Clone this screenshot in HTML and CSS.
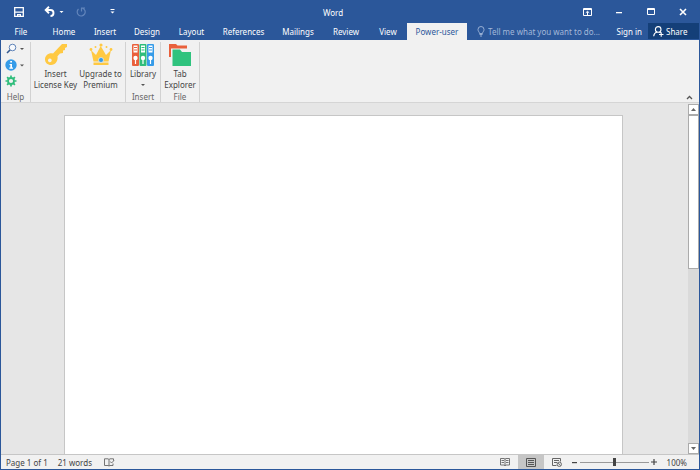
FILE: index.html
```html
<!DOCTYPE html>
<html lang="en">
<head>
<meta charset="utf-8">
<title>Word</title>
<link rel="stylesheet" href="styles.css">
</head>
<body>
<div class="window">
  <header class="titlebar">
    <div class="quick">
      <button class="ico save" aria-label="Save"><svg width="10" height="10" viewBox="0 0 10 10"><path d="M.7.7h8.600v8.600H.7z" fill="none" stroke="#fff" stroke-width="1.300"/><path d="M1 4.500h8v1.200H1zM3 7h4v2.500H5.500V8h-1v1.500H3z" fill="#fff"/></svg></button>
      <button class="ico undo" aria-label="Undo"><svg width="20" height="11" viewBox="0 0 20 11"><path d="M5 .8 1.700 4 5 7.200M2 4h4.500a3 3 0 0 1 0 6" fill="none" stroke="#fff" stroke-width="1.900"/><path d="M15.500 5h4l-2 2z" fill="#fff"/></svg></button>
      <button class="ico redo" aria-label="Redo"><svg width="10" height="10" viewBox="0 0 10 10"><path d="M6.500 1.200A4 4 0 1 1 2.500 2M5.500 4.500V1h3.500" fill="none" stroke="#6285bb" stroke-width="1.200"/></svg></button>
      <button class="ico more" aria-label="Customize toolbar"><svg width="5" height="5" viewBox="0 0 5 5"><path d="M.5 0h4v1h-4zM.5 2.500h4l-2 2z" fill="#fff"/></svg></button>
    </div>
    <h1>Word</h1>
    <div class="controls">
      <button class="ico" aria-label="Ribbon display options"><svg width="9" height="8" viewBox="0 0 9 8"><path d="M.5.5h8v7h-8zM0 1.500h9M4.500 7V3.500M2.800 4.800l1.700-1.500 1.700 1.500" fill="none" stroke="#fff"/></svg></button>
      <button class="ico" aria-label="Minimize"><svg width="8" height="8" viewBox="0 0 8 8"><path d="M1 4h6v1.300H1z" fill="#fff"/></svg></button>
      <button class="ico" aria-label="Maximize"><svg width="8" height="8" viewBox="0 0 8 8"><path d="M.5.5h7v6h-7zM0 1.500h8" fill="none" stroke="#fff"/></svg></button>
      <button class="ico" aria-label="Close"><svg width="8" height="8" viewBox="0 0 8 8"><path d="m1 1 6 6M7 1 1 7" stroke="#fff" stroke-width="1.600"/></svg></button>
    </div>
  </header>
  <nav class="tabs">
    <div class="tablist">
      <button class="file">File</button><button>Home</button><button>Insert</button><button>Design</button><button>Layout</button><button>References</button><button>Mailings</button><button>Review</button><button>View</button><button class="active">Power-user</button>
    </div>
    <label class="tell"><svg width="8" height="11" viewBox="0 0 8 11"><path d="M2.500 7.500C2.500 6 1 5.500 1 3.500a3 3 0 0 1 6 0c0 2-1.500 2.500-1.500 4zM2.500 8.500h3M3 10h2" fill="none" stroke="#a3b8d9" stroke-width=".9"/></svg><input type="text" aria-label="Tell me" placeholder="Tell me what you want to do..."></label>
    <button class="signin">Sign in</button>
    <button class="share"><svg width="11" height="11" viewBox="0 0 11 11"><circle cx="5.200" cy="3.400" r="2.800" fill="none" stroke="#fff" stroke-width="1.100"/><path d="M.7 10.300C.9 8 2.300 6.500 3.900 6M6.500 6l1 .8M6 8.500h4.500M8.200 6.300v4.500" fill="none" stroke="#fff" stroke-width="1.100"/></svg>Share</button>
  </nav>
  <section class="ribbon">
    <div class="group help">
      <div class="stack">
        <button class="ico" aria-label="Search"><svg width="20" height="12" viewBox="0 0 20 12"><circle cx="7.500" cy="4.500" r="3.300" fill="#f6f9fd" stroke="#5f83b8"/><path d="M5 7 2 10" stroke="#34598f" stroke-width="1.600"/><path d="M15 5h4l-2 2z" fill="#555"/></svg></button>
        <button class="ico" aria-label="Information"><svg width="20" height="12" viewBox="0 0 20 12"><circle cx="6" cy="6" r="5.700" fill="#359be8"/><path d="M5.200 2h1.800v1.600H5.200zM4.500 5H7v3.500h1V9.700H4.300V8.500h1V6h-.8z" fill="#fff"/><path d="M15 5.500h4l-2 2z" fill="#555"/></svg></button>
        <button class="ico" aria-label="Settings"><svg width="20" height="12" viewBox="0 0 20 12"><circle cx="6" cy="6" r="3" fill="none" stroke="#2fbd7b" stroke-width="1.800"/><path d="M6 .5v2M6 9.500v2M.5 6h2M9.500 6h2M2.100 2.100l1.500 1.500M8.400 8.400l1.500 1.500M9.900 2.100 8.400 3.600M3.600 8.400 2.100 9.900" stroke="#2fbd7b" stroke-width="1.700"/></svg></button>
      </div>
      <span class="caption">Help</span>
    </div>
    <div class="group license">
      <div class="row">
        <button class="big"><svg width="24" height="24" viewBox="0 0 24 24"><path fill-rule="evenodd" d="M18 1h5v3l-2 1v2l-2 .5V10l-3 .5-2.500 2.800c.8 4.700-2 8.700-6.500 8.700-3.500 0-6-2.500-6-5.500 0-4 3.500-6.800 8-6zM5.800 15.500a1.900 1.900 0 1 0 .1 0z" fill="#ffc942"/></svg><span>Insert<br>License Key</span></button>
        <button class="big"><svg width="24" height="24" viewBox="0 0 24 24"><path d="m2 7 5 5 4.700-9L17 12l5-5-2.500 11.500h-15z" fill="#ffc942"/><path d="M4.500 19.500h15v2.500h-15z" fill="#ffc942"/><circle cx="12" cy="2" r="1.600" fill="#ffc942"/><circle cx="2" cy="6.500" r="1.400" fill="#ffc942"/><circle cx="22" cy="6.500" r="1.400" fill="#ffc942"/><circle cx="6.500" cy="4" r="1" fill="#ffc942"/><circle cx="17.500" cy="4" r="1" fill="#ffc942"/><circle cx="12" cy="17" r="2.500" fill="#359be8" stroke="#f1f1f1" stroke-width=".7"/></svg><span>Upgrade to<br>Premium</span></button>
      </div>
    </div>
    <div class="group library">
      <div class="row">
        <button class="big"><svg width="24" height="24" viewBox="0 0 24 24"><rect x="1" y="1" width="7" height="22" rx="1" fill="#e9603c"/><rect x="8.500" y="1" width="7" height="22" rx="1" fill="#2fbd7b"/><rect x="16" y="1" width="7" height="22" rx="1" fill="#359be8"/><path d="M2.500 2.500h4v7h-4zM10 2.500h4v7h-4zM17.500 2.500h4v7h-4z" fill="#fff"/><path d="M3 4.500h3M3 7h3" stroke="#e9603c"/><path d="M10.500 4.500h3M10.500 7h3" stroke="#2fbd7b"/><path d="M18 4.500h3M18 7h3" stroke="#359be8"/><circle cx="4.500" cy="15" r="2.200" fill="#fff"/><circle cx="12" cy="15" r="2.200" fill="#fff"/><circle cx="19.500" cy="15" r="2.200" fill="#fff"/><path d="M4.500 16v5M12 16v5M19.500 16v5" stroke="#fff" stroke-width="1.200"/></svg><span>Library</span><svg width="4" height="11" viewBox="0 0 4 11"><path d="M0 4h4L2 6z" fill="#555"/></svg></button>
      </div>
      <span class="caption">Insert</span>
    </div>
    <div class="group explorer">
      <div class="row">
        <button class="big"><svg width="24" height="24" viewBox="0 0 24 24"><path d="M1 1h7l1.500 1.500H19v4H4V14H1z" fill="#e9603c"/><path d="M3 5.500h17v2H5V15H3z" fill="#f1f1f1"/><path d="M4.500 6.500h7.500L14 9h9v14H4.500z" fill="#2fc37e"/></svg><span>Tab<br>Explorer</span></button>
      </div>
      <span class="caption">File</span>
    </div>
    <button class="ico collapse" aria-label="Collapse ribbon"><svg width="7" height="5" viewBox="0 0 7 5"><path d="M1 4 3.500 1.500 6 4" fill="none" stroke="#555" stroke-width="1.300"/></svg></button>
  </section>
  <main class="workspace">
    <div class="canvas"><article class="page"></article></div>
    <div class="scroll">
      <button class="ico" aria-label="Scroll up"><svg width="5" height="3" viewBox="0 0 5 3"><path d="M0 3h5L2.500 0z" fill="#666"/></svg></button>
      <div class="track"><div class="thumb"></div></div>
      <button class="ico" aria-label="Scroll down"><svg width="5" height="3" viewBox="0 0 5 3"><path d="M0 0h5L2.500 3z" fill="#666"/></svg></button>
    </div>
  </main>
  <footer class="status">
    <span class="pages">Page 1 of 1</span>
    <span class="words">21 words</span>
    <button class="ico" aria-label="Proofing"><svg width="11" height="9" viewBox="0 0 11 9"><path d="M5 8V1.500L4 .8H.5v6.700H4L5 8l1-.5h3V5.500M5 1.500 6 .8h3.500v2M6.300 3.500l1.200 1.500L10 2.500" fill="none" stroke="#666" stroke-width=".9"/></svg></button>
    <div class="views">
      <button class="ico" aria-label="Read mode"><svg width="10" height="8" viewBox="0 0 10 8"><path d="M5 8V1L4 .5H.5v6.500H4l1 .7L6 7h3.500V.5H6L5 1M1.500 2.500H4M1.500 4.500H4M6 2.500h2.500M6 4.500h2.500" fill="none" stroke="#666" stroke-width=".9"/></svg></button>
      <button class="ico on" aria-label="Print layout"><svg width="10" height="9" viewBox="0 0 10 9"><path d="M.5.5h9v8h-9zM2 2.500h6M2 4.500h6M2 6.500h6" fill="none" stroke="#555"/></svg></button>
      <button class="ico" aria-label="Web layout"><svg width="10" height="9" viewBox="0 0 10 9"><path d="M4.500 7.500h-4v-7h8v3M2 2.500h5M2 4.500h3" fill="none" stroke="#666"/><circle cx="7.300" cy="6.300" r="2.200" fill="#ddd" stroke="#666" stroke-width=".9"/><path d="M6 5l2.700 2.700" stroke="#666" stroke-width=".8"/></svg></button>
    </div>
    <button class="ico zoom" aria-label="Zoom out"><svg width="5" height="5" viewBox="0 0 5 5"><path d="M0 2h5v1.200H0z" fill="#444"/></svg></button>
    <input class="slider" type="range" aria-label="Zoom" min="0" max="100" value="50">
    <button class="ico zoom" aria-label="Zoom in"><svg width="6" height="6" viewBox="0 0 6 6"><path d="M0 3h6M3 0v6" stroke="#444" stroke-width="1.200"/></svg></button>
    <span class="percent">100%</span>
  </footer>
</div>
</body>
</html>
```
FILE: styles.css
```css
* { box-sizing: border-box; }
body {
  margin: 0;
  font: 8px/11px "Noto Sans", "Open Sans", sans-serif;
  color: #444;
}
button, input {
  font: inherit;
  color: inherit;
  margin: 0;
  padding: 0;
  border: 0;
  background: none;
}
svg { display: block; flex: none; }
.ico { display: flex; align-items: center; justify-content: center; }

.window {
  display: flex;
  flex-direction: column;
  height: 100vh;
  border: solid #2b579a;
  border-width: 0 1px 1px;
  background: #f1f1f1;
}

.titlebar {
  display: grid;
  grid-template-columns: 1fr auto 1fr;
  align-items: center;
  height: 23px;
  background: #2b579a;
  color: #fff;
}
.titlebar h1 {
  margin: 0;
  padding: 2px 34px 0 0;
  font-size: 8px;
  font-weight: 400;
}
.quick { display: flex; align-items: center; padding-left: 13px; }
.undo { margin-left: 20px; }
.redo { margin-left: 12px; }
.more { margin-left: 24px; }
.controls { display: flex; justify-content: flex-end; }
.controls .ico { width: 32px; }

.tabs {
  display: flex;
  height: 17px;
  background: #2b579a;
  color: #fff;
}
.tablist {
  display: grid;
  grid-template-columns: 42px 42px 40px 44px 45px 59px 50px 46px 38px 60px;
}
.file { padding-right: 2px; }
.active { background: #f1f1f1; color: #2b579a; }
.tell {
  display: flex;
  flex: 1;
  align-items: center;
  gap: 3px;
  padding-left: 10px;
}
.tell input { width: 100%; min-width: 0; outline: 0; }
.tell input::placeholder { color: #a3b8d9; opacity: 1; }
.signin { padding: 0 6px; }
.share {
  display: flex;
  align-items: center;
  gap: 2px;
  width: 51px;
  margin-bottom: 1px;
  padding-left: 5px;
  background: #143f78;
}

.ribbon {
  display: flex;
  height: 63px;
  padding-top: 2px;
  border-bottom: 1px solid #d5d5d5;
}
.group {
  display: flex;
  flex-direction: column;
  align-items: center;
  height: 60px;
  padding-top: 1px;
  border-right: 1px solid #d2d2d2;
}
.row { display: flex; }
.help { width: 30px; }
.license { width: 95px; }
.library { width: 35px; }
.explorer { width: 39px; }
.stack {
  display: flex;
  flex-direction: column;
  gap: 4px;
  align-self: flex-start;
  padding-left: 4px;
}
.big {
  display: flex;
  flex-direction: column;
  align-items: center;
  gap: 1px;
  white-space: nowrap;
}
.license .big { width: 45px; }
.caption { margin-top: auto; color: #666; }
.collapse { margin: auto 6px 2px auto; }

.workspace { display: flex; flex: 1; min-height: 0; background: #e6e6e6; }
.canvas { display: flex; flex: 1; padding: 12px 65px 0 63px; }
.page {
  flex: 1;
  background: #fff;
  border: 1px solid #c6c6c6;
  border-bottom: 0;
}
.scroll { display: flex; flex-direction: column; width: 11px; padding-top: 1px; }
.scroll .ico {
  height: 11px;
  background: #fff;
  border: 1px solid #ababab;
}
.track { flex: 1; background: #dadada; }
.thumb {
  height: 47%;
  background: #fff;
  border: 1px solid #ababab;
}

.status {
  display: flex;
  align-items: center;
  height: 15px;
  padding-left: 5px;
  border-top: 1px solid #c6c6c6;
}
.words { margin: 0 12px 0 10px; }
.views { display: flex; align-self: stretch; margin-left: auto; }
.views .ico { width: 26px; }
.on { background: #c6c6c6; }
.zoom { width: 10px; }
.slider {
  appearance: none;
  width: 69px;
  height: 9px;
  background: linear-gradient(#999, #999) center / 100% 1px no-repeat;
}
.slider::-webkit-slider-thumb {
  appearance: none;
  width: 3px;
  height: 8px;
  background: #444;
}
.percent { margin: 0 12px 0 8px; }
```
